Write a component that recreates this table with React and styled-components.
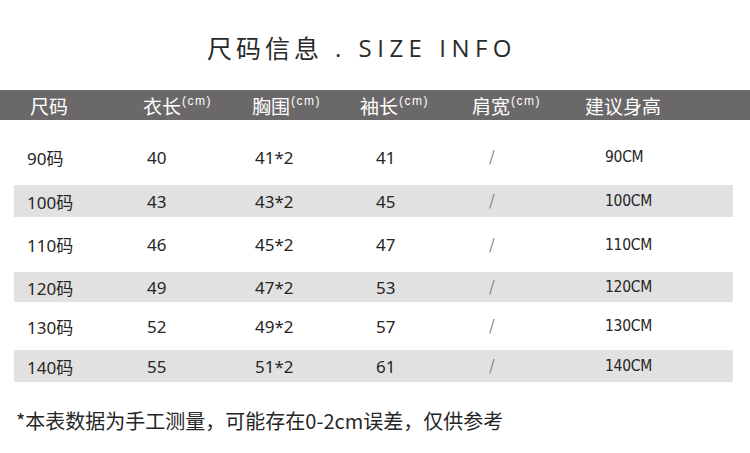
import React from 'react';
import styled, { createGlobalStyle } from 'styled-components';

const GlobalStyle = createGlobalStyle`
  body {
    margin: 0;
    background: #fff;
    font-family: "Noto Sans", "Noto Sans CJK SC", sans-serif;
    color: #262626;
  }
`;

const Page = styled.div`
  width: 750px;
  height: 453px;
  overflow: hidden;
  background: #fff;
`;

const Title = styled.h1`
  margin: 0;
  height: 90px;
  display: flex;
  align-items: center;
  justify-content: center;
  padding-right: 26px;
  padding-top: 4px;
  box-sizing: border-box;
  font-family: "Noto Sans CJK SC", sans-serif;
  font-weight: 400;
  font-size: 25px;
  letter-spacing: 4px;
  color: #2a2a2a;
`;

const Latin = styled.span`
  font-family: "Open Sans", "Noto Sans", sans-serif;
  font-size: 24px;
  letter-spacing: 5.5px;
  margin-left: 12px;
`;

const HeaderBar = styled.div`
  height: 30px;
  background: #6b6869;
  display: grid;
  grid-template-columns: 113px 109px 108px 112px 113px 1fr;
  align-items: center;
  padding-left: 30px;
  color: #fff;
  font-family: "Noto Sans CJK SC", sans-serif;
  font-size: 19px;
  line-height: 1;
`;

const HeadCell = styled.div`
  display: flex;
  align-items: flex-start;
`;

const Unit = styled.sup`
  font-family: "Liberation Sans", sans-serif;
  font-size: 12px;
  letter-spacing: 1.5px;
  margin-left: 1px;
  margin-top: -1px;
`;

const Rows = styled.div`
  display: flex;
  flex-direction: column;
`;

const Row = styled.div`
  height: ${(p) => p.$h}px;
  margin: 0 17px 0 14px;
  padding-left: 13px;
  padding-top: ${(p) => p.$pt || 0}px;
  box-sizing: border-box;
  background: ${(p) => (p.$band ? '#e1e1e1' : 'transparent')};
  display: grid;
  grid-template-columns: 120px 108px 121px 112px 117px 1fr;
  align-items: center;
  font-family: "Noto Sans", "Noto Sans CJK SC", sans-serif;
  font-size: 17px;
  color: #262626;
`;

const Slash = styled.span`
  font-family: "DejaVu Sans", sans-serif;
  font-size: 17px;
  font-weight: 200;
  color: #666;
  padding-left: 1px;
`;

const Height = styled.span`
  font-family: "DejaVu Sans", "Noto Sans CJK SC", sans-serif;
  font-stretch: condensed;
  font-size: 15.5px;
  letter-spacing: -0.3px;
`;

const Note = styled.p`
  margin: 0;
  padding: 24px 0 0 16px;
  font-family: "Noto Sans CJK SC", sans-serif;
  font-size: 20px;
  color: #262626;
`;

const headers = [
  { label: '尺码' },
  { label: '衣长', unit: true },
  { label: '胸围', unit: true },
  { label: '袖长', unit: true },
  { label: '肩宽', unit: true },
  { label: '建议身高' },
];

const rows = [
  { size: '90码', len: 40, chest: '41*2', sleeve: 41, h: 65, pt: 9, cm: '90CM' },
  { size: '100码', len: 43, chest: '43*2', sleeve: 45, h: 32, band: true, cm: '100CM' },
  { size: '110码', len: 46, chest: '45*2', sleeve: 47, h: 55, cm: '110CM' },
  { size: '120码', len: 49, chest: '47*2', sleeve: 53, h: 30, band: true, cm: '120CM' },
  { size: '130码', len: 52, chest: '49*2', sleeve: 57, h: 48, cm: '130CM' },
  { size: '140码', len: 55, chest: '51*2', sleeve: 61, h: 32, band: true, cm: '140CM' },
];

const App = () => (
  <Page>
    <GlobalStyle />
    <Title>
      尺码信息<Latin>. SIZE INFO</Latin>
    </Title>
    <HeaderBar>
      {headers.map((c) => (
        <HeadCell key={c.label}>
          {c.label}
          {c.unit && <Unit>(cm)</Unit>}
        </HeadCell>
      ))}
    </HeaderBar>
    <Rows>
      {rows.map((r) => (
        <Row key={r.size} $h={r.h} $pt={r.pt} $band={r.band}>
          <span>{r.size}</span>
          <span>{r.len}</span>
          <span>{r.chest}</span>
          <span>{r.sleeve}</span>
          <Slash>/</Slash>
          <Height>{r.cm}</Height>
        </Row>
      ))}
    </Rows>
    <Note>*本表数据为手工测量，可能存在0-2cm误差，仅供参考</Note>
  </Page>
);

export default App;
